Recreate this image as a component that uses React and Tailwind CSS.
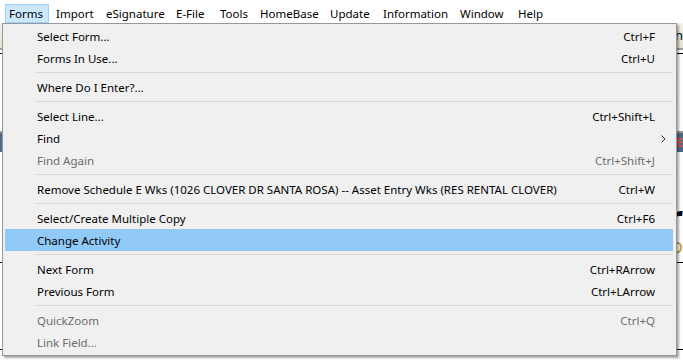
import React from "react";

const font = { fontFamily: '"Noto Sans", "Open Sans", sans-serif' };

const bar = [
  ["Forms", 47],
  ["Import", 50],
  ["eSignature", 70],
  ["E-File", 44],
  ["Tools", 40],
  ["HomeBase", 70],
  ["Update", 53],
  ["Information", 77],
  ["Window", 58],
  ["Help", 40],
];

const items = [
  { t: "Select Form...", k: "Ctrl+F" },
  { t: "Forms In Use...", k: "Ctrl+U" },
  { sep: true },
  { t: "Where Do I Enter?..." },
  { sep: true },
  { t: "Select Line...", k: "Ctrl+Shift+L" },
  { t: "Find", sub: true },
  { t: "Find Again", k: "Ctrl+Shift+J", dis: true },
  { sep: true },
  {
    t: "Remove Schedule E Wks (1026 CLOVER DR SANTA ROSA) -- Asset Entry Wks (RES RENTAL CLOVER)",
    k: "Ctrl+W",
  },
  { sep: true },
  { t: "Select/Create Multiple Copy", k: "Ctrl+F6" },
  { t: "Change Activity", hi: true },
  { sep: true },
  { t: "Next Form", k: "Ctrl+RArrow" },
  { t: "Previous Form", k: "Ctrl+LArrow" },
  { sep: true },
  { t: "QuickZoom", k: "Ctrl+Q", dis: true },
  { t: "Link Field...", dis: true },
];

export default function App() {
  return (
    <div
      className="relative w-[683px] h-[361px] overflow-hidden bg-white text-[11.5px] leading-none text-black"
      style={font}
    >
      {/* menu bar */}
      <div className="flex h-[23px] items-center bg-white pl-[5px]">
        {bar.map(([n, w], i) =>
          i === 0 ? (
            <div key={n} className="flex w-[47px] shrink-0">
              <div className="mt-[3px] flex h-[19px] w-[44px] items-center border border-[#99d1ff] bg-[#cce8ff] pl-[3px] pt-[1px]">
                {n}
              </div>
            </div>
          ) : (
            <div
              key={n}
              className="mt-[3px] flex h-[19px] shrink-0 items-center pl-[4px] pt-[1px]"
              style={{ width: w }}
            >
              {n}
            </div>
          )
        )}
      </div>

      {/* background application content (only edges visible) */}
      <div className="flex flex-col overflow-hidden">
        <div className="flex h-[25px] justify-end bg-gradient-to-b from-[#f6f4ea] to-[#e6e2d0]">
          <span className="pt-[6px] text-[13px]">In</span>
        </div>
        <div className="h-[2px] bg-[#a0a0a0]" />
        <div className="h-[3px] bg-white" />
        <div className="h-[1px] bg-black" />
        <div className="h-[77px] bg-white" />
        <div className="h-[2px] bg-[#9a9a9a]" />
        <div className="flex h-[19px] justify-end bg-[#4b6b8a] text-[13px] font-bold">
          <span className="pt-[3px] text-[#d8e0e8]">R</span>
          <span className="pt-[3px] text-[#e05030]">E</span>
        </div>
        <div className="h-[48px] bg-white" />
        <div className="flex h-[36px] justify-end overflow-hidden bg-white">
          <span className="text-[34px] font-bold leading-none">r</span>
        </div>
        <div className="flex h-[26px] justify-end overflow-hidden bg-white">
          <span className="text-[20px] leading-none text-[#c8a020]">o</span>
        </div>
        <div className="h-[1px] bg-black" />
        <div className="h-[86px] bg-white" />
        <div className="h-[1px] bg-black" />
        <div className="h-[12px] bg-white" />
      </div>

      {/* dropdown */}
      <div className="absolute left-[2px] top-[23px] flex w-[675px] flex-col border border-[#979797] bg-[#f0f0f0] pb-[2px] pl-[2px] pr-[3px] pt-[1px] shadow-[2px_2px_2px_rgba(0,0,0,0.35)]">
        {items.map((it, i) =>
          it.sep ? (
            <div key={i} className="flex h-[7px] items-center pl-[30px]">
              <div className="h-[1px] w-full bg-[#d7d7d7]" />
            </div>
          ) : (
            <div
              key={i}
              className={
                "flex h-[22px] items-center pl-[32px] pr-[18px] pt-[1px] " +
                (it.hi ? "bg-[#91c9f7] " : "") +
                (it.dis ? "text-[#6d6d6d]" : "text-black")
              }
            >
              <span className="flex-1 whitespace-nowrap">{it.t}</span>
              {it.k && <span className="whitespace-nowrap">{it.k}</span>}
              {it.sub && (
                <svg width="5" height="8" viewBox="0 0 5 8" className="mr-[-11px]">
                  <path d="M0.5 0.5 L4 4 L0.5 7.5" fill="none" stroke="#333" strokeWidth="1" />
                </svg>
              )}
            </div>
          )
        )}
      </div>
    </div>
  );
}
